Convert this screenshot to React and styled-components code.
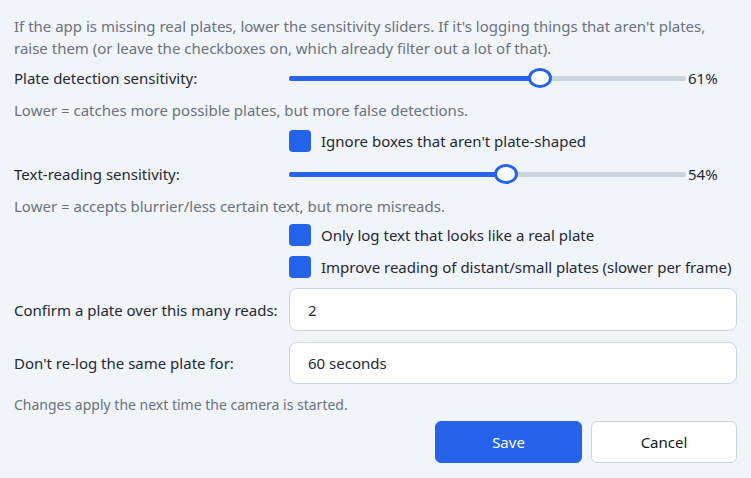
import React from "react";
import styled, { createGlobalStyle } from "styled-components";

const Global = createGlobalStyle`
  html, body {
    margin: 0;
    background: #f1f4f9;
    font-family: "Noto Sans", "Open Sans", sans-serif;
    color: #1f2937;
  }
`;

const Panel = styled.div`
  display: flex;
  flex-direction: column;
  gap: 10px;
  padding: 15px 14px 14px;
  width: 751px;
  box-sizing: border-box;
`;

const Intro = styled.p`
  margin: 0 0 -3px;
  font-size: 15px;
  line-height: 22px;
  color: #6b7280;
`;

const Row = styled.div`
  display: grid;
  grid-template-columns: 275px 1fr;
  align-items: center;
  margin-top: ${(p) => p.$shift || 0}px;
`;

const Label = styled.label`
  font-size: 15px;
  line-height: 22px;
  color: #1f2937;
`;

const Hint = styled.div`
  font-size: ${(p) => (p.small ? 14 : 15)}px;
  line-height: 20px;
  color: #6b7280;
  margin-top: ${(p) => p.$shift || 0}px;
`;

const SliderWrap = styled.div`
  display: flex;
  align-items: center;
  gap: 2px;
  height: 24px;
`;

const Track = styled.div`
  position: relative;
  flex: 1;
  height: 5px;
  border-radius: 3px;
  background: #cbd5e1;
`;

const Fill = styled.div`
  height: 100%;
  border-radius: 3px;
  background: #2563eb;
`;

const Thumb = styled.div`
  position: absolute;
  top: 50%;
  width: 24px;
  height: 20px;
  box-sizing: border-box;
  border: 3px solid #2563eb;
  border-radius: 50%;
  background: #fff;
  transform: translate(-50%, -50%);
`;

const Value = styled.span`
  width: 49px;
  font-size: 15px;
  color: #1f2937;
`;

const CheckRow = styled.label`
  grid-column: 2;
  display: flex;
  align-items: center;
  gap: 10px;
  font-size: 15px;
  line-height: 22px;
  white-space: nowrap;
  color: #1f2937;
`;

const Box = styled.span`
  width: 22px;
  height: 22px;
  border-radius: 4px;
  background: ${(p) => (p.checked ? "#2563eb" : "#fff")};
  flex-shrink: 0;
`;

const Input = styled.input`
  height: ${(p) => p.$h || 42}px;
  box-sizing: border-box;
  border: 1px solid #cbd5e1;
  border-radius: 8px;
  background: #fff;
  padding: 0 18px;
  font-family: inherit;
  font-size: 15px;
  color: #1f2937;
  outline: none;
`;

const Actions = styled.div`
  display: flex;
  justify-content: flex-end;
  gap: 9px;
  margin-top: -4px;
`;

const Button = styled.button`
  width: ${(p) => (p.primary ? 147 : 146)}px;
  height: 42px;
  border-radius: 6px;
  border: 1px solid ${(p) => (p.primary ? "#2563eb" : "#cbd5e1")};
  background: ${(p) => (p.primary ? "#2563eb" : "#fff")};
  color: ${(p) => (p.primary ? "#fff" : "#111827")};
  font-family: inherit;
  font-size: 15px;
`;

const Slider = ({ pos, value }) => (
  <SliderWrap>
    <Track>
      <Fill style={{ width: `${pos}%` }} />
      <Thumb style={{ left: `${pos}%` }} />
    </Track>
    <Value>{value}%</Value>
  </SliderWrap>
);

const Check = ({ children, shift }) => (
  <Row $shift={shift}>
    <CheckRow>
      <Box checked />
      {children}
    </CheckRow>
  </Row>
);

export default function App() {
  return (
    <>
      <Global />
      <Panel>
        <Intro>
          If the app is missing real plates, lower the sensitivity sliders. If it's logging things that aren't plates,
          raise them (or leave the checkboxes on, which already filter out a lot of that).
        </Intro>
        <Row>
          <Label>Plate detection sensitivity:</Label>
          <Slider pos={63.2} value={61} />
        </Row>
        <Hint>Lower = catches more possible plates, but more false detections.</Hint>
        <Check>Ignore boxes that aren't plate-shaped</Check>
        <Row>
          <Label>Text-reading sensitivity:</Label>
          <Slider pos={54.7} value={54} />
        </Row>
        <Hint>Lower = accepts blurrier/less certain text, but more misreads.</Hint>
        <Check shift={-2}>Only log text that looks like a real plate</Check>
        <Check>Improve reading of distant/small plates (slower per frame)</Check>
        <Row>
          <Label>Confirm a plate over this many reads:</Label>
          <Input $h={43} defaultValue="2" />
        </Row>
        <Row $shift={1}>
          <Label>Don't re-log the same plate for:</Label>
          <Input defaultValue="60 seconds" />
        </Row>
        <Hint small $shift={1}>Changes apply the next time the camera is started.</Hint>
        <Actions>
          <Button primary>Save</Button>
          <Button>Cancel</Button>
        </Actions>
      </Panel>
    </>
  );
}
